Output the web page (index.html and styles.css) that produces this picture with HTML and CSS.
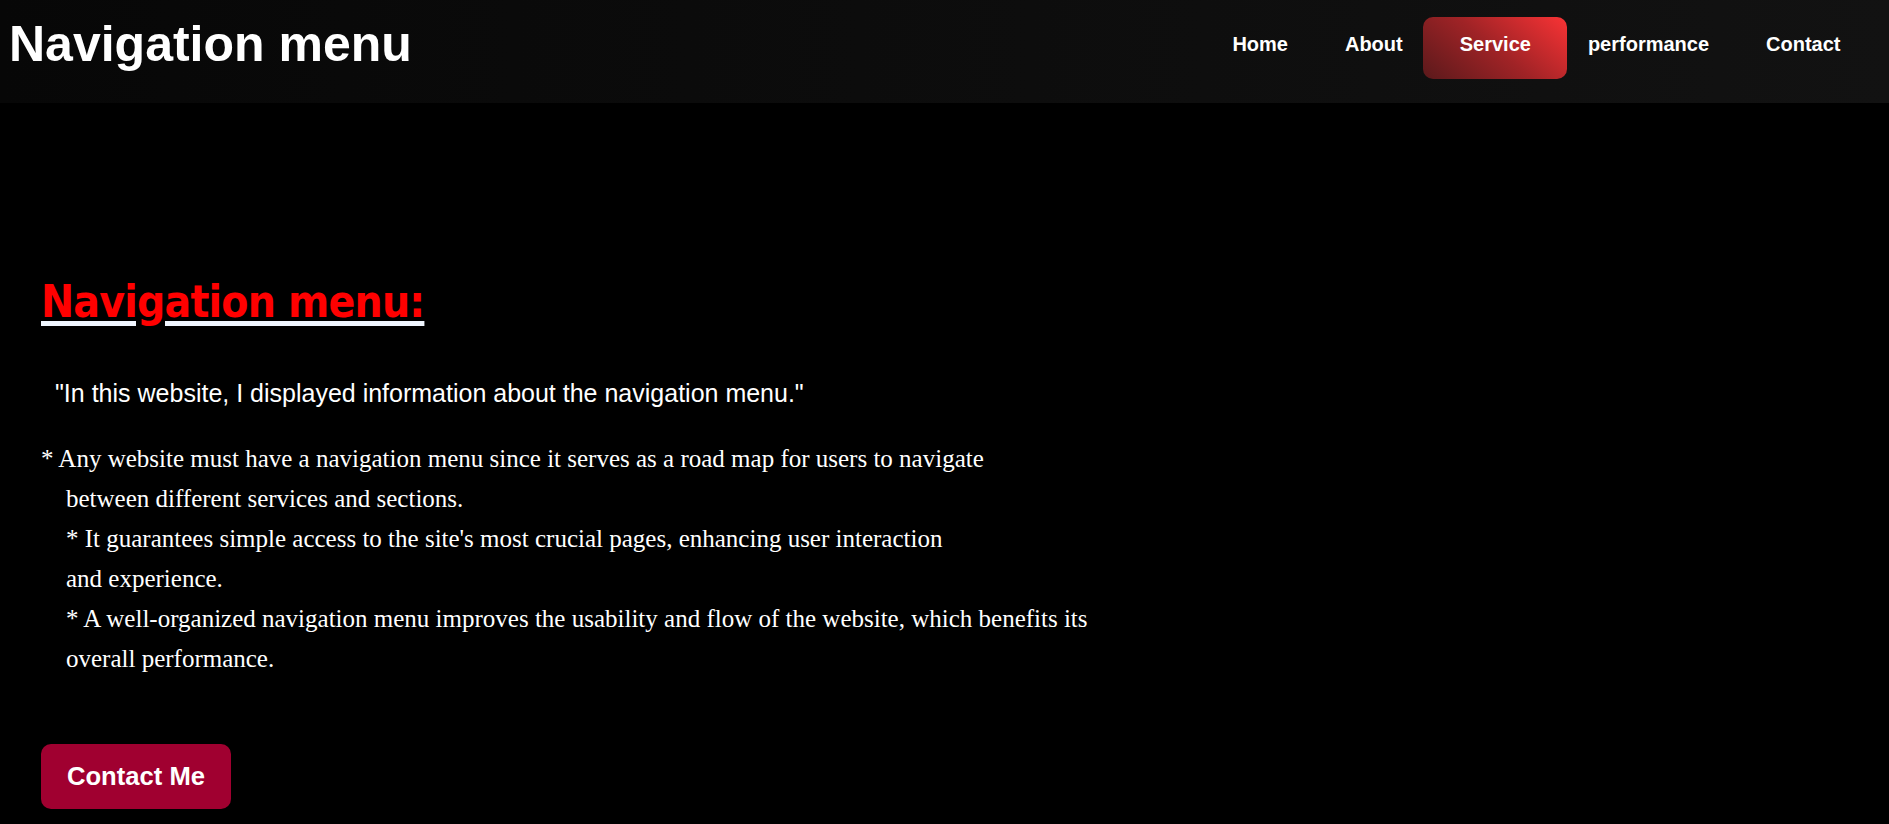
FILE: index.html
```html
<!DOCTYPE html>
<html lang="en">
<head>
<meta charset="utf-8">
<title>Navigation menu</title>
<link rel="stylesheet" href="styles.css">
</head>
<body>
<header class="topbar">
  <h1 class="brand">Navigation menu</h1>
  <nav class="menu">
    <a class="menu-link" href="#">Home</a>
    <a class="menu-link" href="#">About</a>
    <a class="menu-link is-active" href="#">Service</a>
    <a class="menu-link" href="#">performance</a>
    <a class="menu-link" href="#">Contact</a>
  </nav>
</header>
<main class="content">
  <h2 class="headline">Navigation menu:</h2>
  <p class="quote">"In this website, I displayed information about the navigation menu."</p>
  <div class="points">
    <p class="line">* Any website must have a navigation menu since it serves as a road map for users to navigate</p>
    <p class="line indent">between different services and sections.</p>
    <p class="line indent">* It guarantees simple access to the site's most crucial pages, enhancing user interaction</p>
    <p class="line indent">and experience.</p>
    <p class="line indent">* A well-organized navigation menu improves the usability and flow of the website, which benefits its</p>
    <p class="line indent">overall performance.</p>
  </div>
  <a class="cta" href="#">Contact Me</a>
</main>
</body>
</html>
```

FILE: styles.css
```css
* {
  box-sizing: border-box;
}

html, body {
  margin: 0;
  padding: 0;
  background: #000;
}

body {
  font-family: "Liberation Sans", Arial, sans-serif;
  color: #fff;
}

.topbar {
  display: flex;
  justify-content: space-between;
  align-items: flex-start;
  height: 103px;
  padding: 0 20px 0 9px;
  background: linear-gradient(to right, #070707, #121212);
}

.brand {
  margin: 16px 0 0;
  font-family: "Liberation Sans", Arial, sans-serif;
  font-weight: bold;
  font-size: 50px;
  line-height: 57px;
  color: #fff;
}

.menu {
  display: flex;
  margin-top: 17px;
}

.menu-link {
  display: block;
  padding: 16px 28.5px 23px;
  font-family: "Liberation Sans", Arial, sans-serif;
  font-weight: bold;
  font-size: 20px;
  line-height: 23px;
  color: #fff;
  text-decoration: none;
  border-radius: 10px;
}

.menu-link.is-active {
  padding: 16px 36.5px 23px;
  margin: 0 -8px;
  background: linear-gradient(40deg, #5a191b 0%, #a02326 50%, #f93335 100%);
}

.content {
  padding: 173px 0 0 41px;
}

.headline {
  margin: 0;
  font-family: "DejaVu Sans", "Liberation Sans Narrow", sans-serif;
  font-stretch: condensed;
  font-weight: bold;
  font-size: 44px;
  line-height: 51px;
  letter-spacing: -0.8px;
  color: #ff0000;
  text-decoration: underline;
  text-decoration-color: #f0f6ff;
  text-decoration-thickness: 5px;
  text-underline-offset: 4px;
}

.quote {
  margin: 52px 0 0;
  padding-left: 14px;
  font-family: "Liberation Sans", Arial, sans-serif;
  font-size: 25px;
  line-height: 29px;
  color: #fff;
}

.points {
  margin-top: 31px;
  font-family: "Liberation Serif", "Times New Roman", serif;
  font-size: 25px;
  line-height: 40px;
  color: #fff;
}

.line {
  margin: 0;
}

.indent {
  padding-left: 25px;
}

.cta {
  display: inline-block;
  margin-top: 65px;
  padding: 18px 26px;
  background: #a00030;
  border-radius: 10px;
  font-family: "Liberation Sans", Arial, sans-serif;
  font-weight: bold;
  font-size: 25.6px;
  line-height: 29px;
  color: #fff;
  text-decoration: none;
}
```
